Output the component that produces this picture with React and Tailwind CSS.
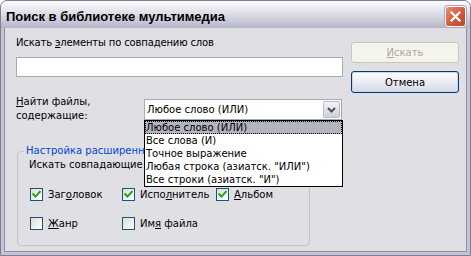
import React from 'react';

const UI = { fontFamily: '"DejaVu Sans", "Liberation Sans", sans-serif' };

const Check = () => (
  <svg width="9" height="9" viewBox="0 0 9 9" className="block">
    <path d="M1.2 4.2 L3.4 6.6 L7.8 1.8" fill="none" stroke="#21a121" strokeWidth="2" strokeLinecap="square" />
  </svg>
);

const Box = ({ label, checked }) => (
  <div className="flex items-center gap-[5px] h-[13px]">
    <div className="w-[13px] h-[13px] shrink-0 border border-[#1c5180] bg-gradient-to-br from-[#dcdcd7] to-white flex items-center justify-center">
      {checked && <Check />}
    </div>
    <span className="leading-[14px] whitespace-nowrap">{label}</span>
  </div>
);

const options = [
  'Любое слово (ИЛИ)',
  'Все слова (И)',
  'Точное выражение',
  'Любая строка (азиатск. "ИЛИ")',
  'Все строки (азиатск. "И")',
];

export default function App() {
  return (
    <div
      className="w-[471px] h-[256px] flex flex-col bg-[#c4c4d4] border border-[#7d7d96] rounded-t-[7px] overflow-hidden text-[10px] text-black"
      style={UI}
    >
      {/* title bar */}
      <div className="h-[27px] shrink-0 flex items-center justify-between pl-[5px] pr-[4px] bg-gradient-to-b from-[#fdfdfe] via-[#dcdce6] to-[#b4b4c8]">
        <span
          className="pt-[4px] font-bold text-[13px] text-black"
          style={{ fontFamily: '"Liberation Sans", Arial, sans-serif' }}
        >
          Поиск в библиотеке мультимедиа
        </span>
        <div className="mt-[3px] w-[21px] h-[21px] rounded-[3px] border border-white bg-gradient-to-br from-[#e88d74] via-[#d35f3e] to-[#b8432a] flex items-center justify-center shadow-[0_0_0_1px_#a8a8b8]">
          <svg width="11" height="11" viewBox="0 0 11 11">
            <path d="M1.5 1.5 L9.5 9.5 M9.5 1.5 L1.5 9.5" stroke="white" strokeWidth="2.2" strokeLinecap="square" />
          </svg>
        </div>
      </div>

      {/* body */}
      <div className="flex-1 mx-[3px] mb-[3px] border border-t-0 border-[#8d8da6] bg-[#e0dfe3] flex gap-[8px] pl-[11px] pr-[6px] pt-[8px]">
        <div className="w-[327px] flex flex-col">
          <div className="h-[14px] leading-[14px] tracking-[-0.15px]">
            Искать <u>э</u>лементы по совпадению слов
          </div>
          <div className="mt-[7px] h-[20px] border border-[#a5acb5] bg-white" />

          <div className="mt-[18px] flex items-start">
            <div className="w-[128px] leading-[14px]">
              <u>Н</u>айти файлы,
              <br />
              содержащие:
            </div>
            <div className="relative mt-[4px] w-[198px]">
              <div className="h-[21px] border border-[#a5acb5] bg-white flex items-center justify-between pl-[2px] pr-[1px]">
                <span className="leading-[14px]">Любое слово (ИЛИ)</span>
                <div className="w-[17px] h-[17px] rounded-[2px] border border-[#b9b9cb] bg-gradient-to-b from-[#f3f3f7] to-[#cfcfdd] flex items-center justify-center">
                  <svg width="9" height="6" viewBox="0 0 9 6">
                    <path d="M1 1 L4.5 4.5 L8 1" fill="none" stroke="#4d4d5d" strokeWidth="2" />
                  </svg>
                </div>
              </div>
              <div className="absolute left-0 top-full z-10 w-[199px] border border-black bg-white">
                {options.map((o, i) => (
                  <div
                    key={o}
                    className={`h-[13px] leading-[13px] pl-[1px] whitespace-nowrap ${
                      i === 0 ? 'bg-[#b2b4bf] outline-1 outline-dotted outline-black -outline-offset-1' : ''
                    }`}
                  >
                    {o}
                  </div>
                ))}
              </div>
            </div>
          </div>

          {/* group box */}
          <div className="relative mt-[28px] ml-[1px] w-[293px] h-[95px] border border-[#c5c4cc] rounded-[4px] pl-[11px] pt-[6px]">
            <span className="absolute -top-[8px] left-[6px] px-[2px] bg-[#e0dfe3] leading-[14px] text-[#0046d5] whitespace-nowrap">
              Настройка расширенного поиска
            </span>
            <div className="leading-[14px] whitespace-nowrap">Искать совпадающие слова в полях:</div>
            <div className="mt-[16px] pl-[1px] grid grid-cols-[92px_94px_auto] gap-y-[16px]">
              <Box checked label={<>Заг<u>о</u>ловок</>} />
              <Box checked label={<>Испо<u>л</u>нитель</>} />
              <Box checked label={<><u>А</u>льбом</>} />
              <Box label={<><u>Ж</u>анр</>} />
              <Box label={<>Им<u>я</u> файла</>} />
            </div>
          </div>
        </div>

        <div className="w-[108px] flex flex-col gap-[8px] pt-[6px]">
          <div className="h-[21px] rounded-[3px] border border-[#c9c7ba] bg-[#f5f4ea] text-[#aca899] flex items-center justify-center">
            <span><u>И</u>скать</span>
          </div>
          <div className="h-[22px] rounded-[3px] border border-[#003c74] bg-gradient-to-b from-white to-[#d8d8e6] shadow-[inset_0_0_0_1px_#c2d6f2] flex items-center justify-center">
            <span>Отмена</span>
          </div>
        </div>
      </div>
    </div>
  );
}
